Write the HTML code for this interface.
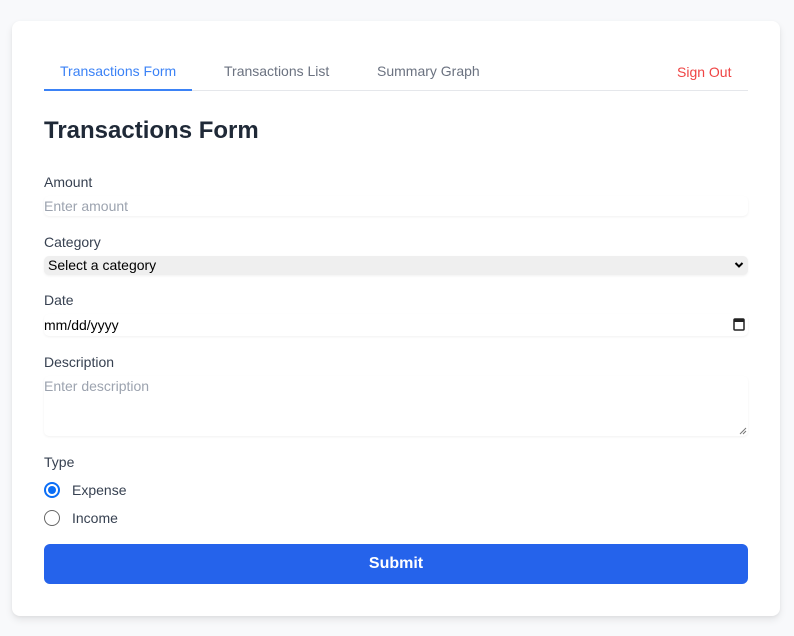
<!DOCTYPE html>
<html><head><style>
*{box-sizing:border-box;margin:0;padding:0}
body{width:794px;height:636px;background:#f8f9fb;font-family:"Liberation Sans",sans-serif;position:relative;overflow:hidden}
.card{position:absolute;left:12px;top:21px;width:768px;height:595px;background:#fff;border-radius:8px;box-shadow:0 4px 8px rgba(0,0,0,0.08),0 1px 3px rgba(0,0,0,0.05)}
.a{position:absolute;white-space:nowrap}
.tab{font-size:14px;color:#6b7280;top:63px}
.lbl{font-size:14px;color:#374151;left:44px}
.in{position:absolute;left:44px;width:704px;background:#fff;border-radius:5px;box-shadow:0 1px 2px rgba(0,0,0,0.06)}
.ph{font-size:14px;color:#9ca3af}
</style></head><body>
<div class="card"></div>
<div class="a tab" style="left:60px;color:#3b82f6">Transactions Form</div>
<div class="a tab" style="left:224px">Transactions List</div>
<div class="a tab" style="left:377px">Summary Graph</div>
<div class="a" style="left:677px;top:64px;font-size:14px;color:#ef4444">Sign Out</div>
<div class="a" style="left:44px;top:90px;width:704px;height:1px;background:#e5e7eb"></div>
<div class="a" style="left:44px;top:89px;width:148px;height:2px;background:#3b82f6"></div>
<div class="a" style="left:44px;top:117px;font-size:24px;font-weight:bold;color:#1f2937">Transactions Form</div>

<div class="a lbl" style="top:174px">Amount</div>
<div class="in" style="top:196px;height:20px"></div>
<div class="a ph" style="left:44px;top:198px">Enter amount</div>

<div class="a lbl" style="top:234px">Category</div>
<div class="in" style="top:256px;height:19px;background:#efefef"></div>
<div class="a" style="left:48px;top:257px;font-size:14px;color:#000">Select a category</div>
<svg class="a" style="left:734px;top:261px" width="10" height="8" viewBox="0 0 10 8"><path d="M1.5 2 L5 5.5 L8.5 2" stroke="#000" stroke-width="2" fill="none"/></svg>

<div class="a lbl" style="top:292px">Date</div>
<div class="in" style="top:314px;height:22px"></div>
<div class="a" style="left:44px;top:317px;font-size:14px;color:#000">mm/dd/yyyy</div>
<svg class="a" style="left:733px;top:317px" width="12" height="14" viewBox="0 0 12 14"><rect x="1" y="2" width="10" height="11" fill="none" stroke="#222" stroke-width="1.5" rx="1"/><rect x="1" y="2" width="10" height="3" fill="#222"/></svg>

<div class="a lbl" style="top:354px">Description</div>
<div class="in" style="top:376px;height:60px"></div>
<div class="a ph" style="left:44px;top:378px">Enter description</div>
<svg class="a" style="left:739px;top:427px" width="8" height="8"><path d="M1 7L7 1M4 7L7 4" stroke="#777" stroke-width="1"/></svg>

<div class="a lbl" style="top:454px">Type</div>
<div class="a" style="left:44px;top:482px;width:16px;height:16px;border-radius:50%;border:2px solid #0b6ef6;background:#fff"></div>
<div class="a" style="left:48px;top:486px;width:8px;height:8px;border-radius:50%;background:#0b6ef6"></div>
<div class="a" style="left:72px;top:482px;font-size:14px;color:#374151">Expense</div>
<div class="a" style="left:44px;top:510px;width:16px;height:16px;border-radius:50%;border:1px solid #666;background:#fff"></div>
<div class="a" style="left:72px;top:510px;font-size:14px;color:#374151">Income</div>

<div class="a" style="left:44px;top:544px;width:704px;height:40px;background:#2563eb;border-radius:6px;color:#fff;font-size:16px;font-weight:bold;text-align:center;line-height:40px">Submit</div>
</body></html>
